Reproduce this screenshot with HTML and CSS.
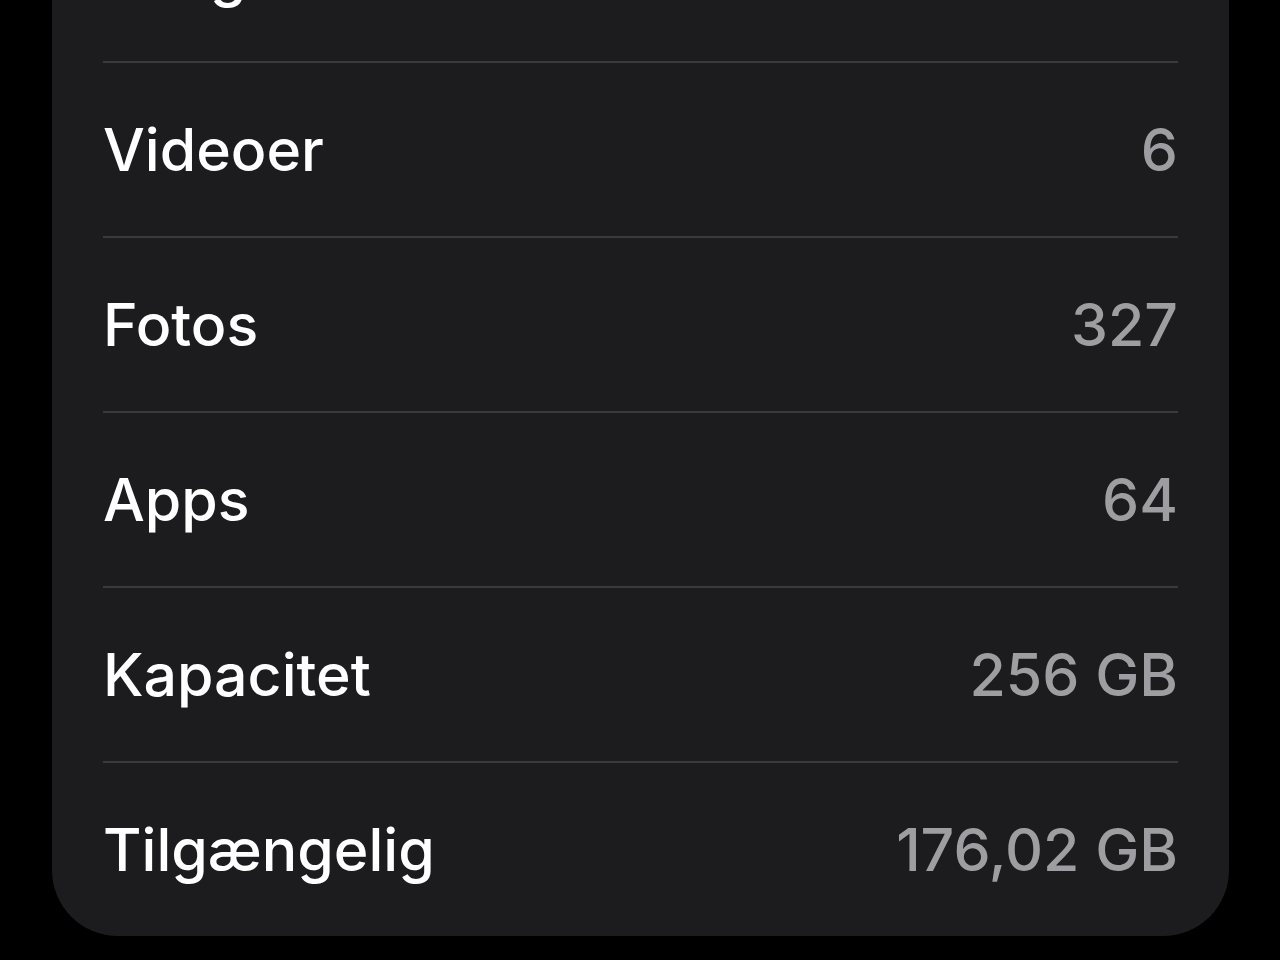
FILE: index.html
```html
<!DOCTYPE html>
<html lang="da">
<head>
    <meta charset="UTF-8">
    <meta name="viewport" content="width=device-width, initial-scale=1.0">
    <title>Om</title>
    <link rel="stylesheet" href="styles.css">
</head>
<body>

<div class="screen">
    <div class="group">
        <div class="row"><span class="label">Sange</span><span class="value">0</span></div>
        <div class="row"><span class="label">Videoer</span><span class="value">6</span></div>
        <div class="row"><span class="label">Fotos</span><span class="value">327</span></div>
        <div class="row"><span class="label">Apps</span><span class="value">64</span></div>
        <div class="row"><span class="label">Kapacitet</span><span class="value">256 GB</span></div>
        <div class="row"><span class="label">Tilgængelig</span><span class="value">176,02 GB</span></div>
    </div>
</div>

</body>
</html>
```

FILE: styles.css
```css
html, body {
    margin: 0;
    background: #000;
}

body {
    font-family: Inter, "Liberation Sans", Arial, sans-serif;
    height: 960px;
    overflow: hidden;
}

.screen {
    padding: 0 51px 0 52px;
    margin-top: -114px;
}

/* inset grouped list, ios dark */
.group {
    background-color: #1c1c1e;
    border-radius: 0 0 66px 66px;
    padding: 0 51px;
}

.row {
    height: 175px;
    box-sizing: border-box;
    display: flex;
    align-items: center;
    justify-content: space-between;
    font-size: 59px;
    font-weight: 500;
}
.row + .row {
    border-top: 2px solid #3a3a3c;
}

.label {
    color: #ffffff;
}

.value {
    color: #9d9da2;
}
```
